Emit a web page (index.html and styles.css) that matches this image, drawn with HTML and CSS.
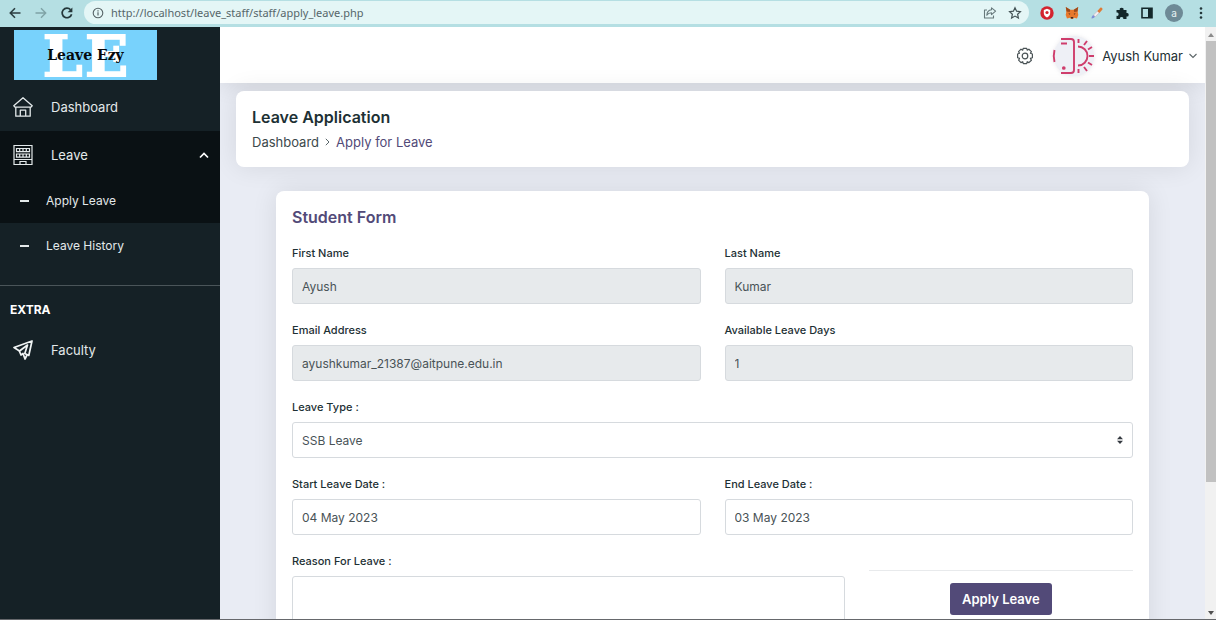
FILE: index.html
```html
<!DOCTYPE html>
<html lang="en">
<head>
<meta charset="utf-8">
<title>Leave Application</title>
<link rel="stylesheet" href="styles.css">
</head>
<body>
<div class="window">
  <div class="toolbar">
    <button class="tool" type="button" aria-label="Back"><svg width="14" height="14" viewBox="0 0 14 14" fill="none" stroke="#2c3e41" stroke-width="1.6"><path d="M12.5 7H2.5M7 2.3 2.3 7 7 11.7"/></svg></button>
    <button class="tool" type="button" aria-label="Forward"><svg width="14" height="14" viewBox="0 0 14 14" fill="none" stroke="#7fa3a6" stroke-width="1.4"><path d="M1.5 7h10M7 2.3 11.7 7 7 11.7"/></svg></button>
    <button class="tool" type="button" aria-label="Reload"><svg width="14" height="14" viewBox="0 0 14 14"><path d="M11.6 8.2A4.8 4.8 0 1 1 10.6 3.8" fill="none" stroke="#24373a" stroke-width="1.7"/><path d="M12.4 1.4v4.8H7.6z" fill="#24373a"/></svg></button>
    <div class="address">
      <svg width="12" height="12" viewBox="0 0 12 12" fill="none" stroke="#566366"><circle cx="6" cy="6" r="4.8" stroke-width="1.1"/><path d="M6 5.3v3.3M6 3.2v1.2" stroke-width="1.2"/></svg>
      <input class="url" type="text" aria-label="Address" value="http://localhost/leave_staff/staff/apply_leave.php">
      <button class="tool" type="button" aria-label="Share"><svg width="14" height="14" viewBox="0 0 14 14" fill="none" stroke="#66787b" stroke-width="1.1" stroke-linejoin="round"><path d="M4 4H1.5v8h9V9.6"/><path d="M8.5 1.8 12.6 5.2 8.5 8.6V6.7C6.3 6.7 4.9 7.4 3.8 9.2 4 6 5.8 4 8.5 3.7z"/></svg></button>
      <button class="tool" type="button" aria-label="Bookmark"><svg width="14" height="14" viewBox="0 0 14 14" fill="none" stroke="#445356" stroke-width="1.2"><path d="m7 1.7 1.6 3.5 3.8.4-2.8 2.6.8 3.8L7 10.1 3.6 12l.8-3.8L1.6 5.6l3.8-.4z"/></svg></button>
    </div>
    <div class="extensions">
      <button class="tool" type="button" aria-label="Ad blocker"><svg width="14" height="14" viewBox="0 0 14 14"><circle cx="7" cy="7" r="6.7" fill="#d3242f"/><path d="M7 2.7 10.2 4v3c0 2-1.4 3.5-3.2 4.5C5.2 10.5 3.8 9 3.8 7V4z" fill="#fff"/><circle cx="7" cy="6.5" r="1.6" fill="#d3242f"/></svg></button>
      <button class="tool" type="button" aria-label="Wallet"><svg width="14" height="14" viewBox="0 0 14 14"><path d="m.8 1 4.4 2.8h3.6L13.2 1l-.5 5 .6 3-1.3 3.5-3-.8L8 13H6l-1-1.300-3 .8L.7 9l.6-3z" fill="#e8792c"/><path d="m.8 1 4.400 2.800L4.800 6 1.600 5.600zM13.200 1 8.800 3.800 9.200 6l3.200-.4z" fill="#9c4a1c"/><path d="m3.300 7.200 2 .6-.5 1zM10.700 7.200l-2 .6.5 1zM5.700 11h2.600L8 12.600H6z" fill="#3b2b26"/></svg></button>
      <button class="tool" type="button" aria-label="Color picker"><svg width="14" height="14" viewBox="0 0 14 14"><path d="M1.500 12.500c.2-2.200 1-3.500 2.500-3.500l1 1c0 1.400-1.500 2.300-3.500 2.500z" fill="#7e8fd6"/><path d="m3.500 9 4-4 1.800 1.800-4 4z" fill="#f3eef1" stroke="#b9a9b4" stroke-width=".5"/><path d="m7.300 5 3-3.200c1-.9 2.900.8 2 1.900l-3 3.300z" fill="#e07a35"/></svg></button>
      <button class="tool" type="button" aria-label="Extensions"><svg width="14" height="14" viewBox="0 0 14 14"><path d="M1.500 4h3.300a1.900 1.900 0 1 1 3.700 0h3v3a1.800 1.800 0 1 1 0 3.500V13H8.300a1.700 1.700 0 1 0-3.300 0H1.500V9.800a1.700 1.700 0 1 0 0-3.300z" fill="#14282b"/></svg></button>
      <button class="tool" type="button" aria-label="Side panel"><svg width="14" height="14" viewBox="0 0 14 14"><path d="M2 2.200h10v9.600H2z" fill="none" stroke="#14282b" stroke-width="1.600"/><path d="M8 2h4v10H8z" fill="#14282b"/></svg></button>
      <button class="profile" type="button" aria-label="Profile">a</button>
      <button class="tool" type="button" aria-label="Menu"><svg width="14" height="14" viewBox="0 0 14 14" fill="#24373a"><circle cx="7" cy="2.500" r="1.300"/><circle cx="7" cy="7" r="1.300"/><circle cx="7" cy="11.500" r="1.300"/></svg></button>
    </div>
  </div>

  <div class="page">
    <aside class="sidebar">
      <a class="brand" href="#">
        <span class="brand-initials" aria-hidden="true"><span>L</span><span>E</span></span>
        <span class="brand-name">Leave Ezy</span>
      </a>
      <nav class="menu">
        <a class="menu-item" href="#">
          <svg width="20" height="22" viewBox="0 0 20 22" fill="none" stroke="#e3e9ea" stroke-width="1.300" stroke-linejoin="round"><path d="M.8 9.800 10 1.800l9.200 8-1.200 1.300H2zM2.800 11v9.200h14.400V11M7.300 20v-5.800h5.400V20"/></svg>
          <span>Dashboard</span>
        </a>
        <div class="menu-open">
          <a class="menu-item" href="#">
            <svg width="20" height="22" viewBox="0 0 20 22" fill="none" stroke="#e3e9ea" stroke-width="1.200"><path d="M1 1.500h18v19H1zM1 15.500h18M3.500 4.500h13v3.200h-13zM3.500 10h13v3.200h-13zM6.700 4.500v3.200M10 4.500v3.200M13.300 4.500v3.200M6.700 10v3.200M10 10v3.200M13.300 10v3.200M7 20.500v-3h6v3"/></svg>
            <span>Leave</span>
            <svg class="caret" width="10" height="8" viewBox="0 0 10 8" fill="none" stroke="#fff" stroke-width="1.700"><path d="m1 6.500 4-4 4 4"/></svg>
          </a>
          <a class="sub-item" href="#">Apply Leave</a>
        </div>
        <a class="sub-item" href="#">Leave History</a>
        <hr class="menu-rule">
        <h2 class="menu-title">EXTRA</h2>
        <a class="menu-item" href="#">
          <svg width="20" height="22" viewBox="0 0 20 22" fill="none" stroke="#f0f4f4" stroke-width="1.700" stroke-linejoin="round" stroke-linecap="round"><path d="M1 8.500 19 2l-3.200 14.500-4-2L14.500 6 6.500 12z"/><path d="M6.500 12.500 8 16l2-1.500 2 5.500 2-4"/></svg>
          <span>Faculty</span>
        </a>
      </nav>
    </aside>

    <div class="main">
      <header class="header">
        <button class="gear" type="button" aria-label="Settings"><svg width="18" height="18" viewBox="0 0 18 18" fill="none" stroke="#4a5356" stroke-width="1.200" stroke-linejoin="round"><circle cx="9" cy="9" r="2.800"/><path d="M7.300 1.300h3.400l.5 1.800 1.700-.9 2.500 2.400-1 1.700 2 .7v3.700l-2 .7 1 1.800-2.500 2.400-1.700-.9-.5 2H7.300l-.6-2-1.700.9-2.400-2.400.9-1.800-1.900-.7V7l1.900-.7-.9-1.700L5 2.200l1.700.9z"/></svg></button>
        <button class="account" type="button">
          <svg class="avatar" width="44" height="44" viewBox="0 0 44 44" fill="none" stroke="#cf3d6c" stroke-width="1.900"><circle cx="22" cy="22" r="20" fill="#eef0f6" stroke="none"/><path d="M2.500 16c-1 4-1 8 0 12"/><path d="M9 5h10q3 0 3 3v28q0 3-3 3H9M9 9.500h6"/><circle cx="11.800" cy="34" r=".9" fill="#cf3d6c"/><path d="M26 12.500a9.500 9.500 0 0 1 0 19M26.500 9V5M32 11l3-4M36 15.500l4-2.500M37 22h5M36 28.500l4 2.500M32 33l3 4M26.500 35v4"/></svg>
          <span>Ayush Kumar</span>
          <svg width="8" height="6" viewBox="0 0 8 6" fill="none" stroke="#5c6568" stroke-width="1.100"><path d="m.5 1 3.500 3.500L7.500 1"/></svg>
        </button>
      </header>

      <main class="content">
        <section class="card title-card">
          <h1>Leave Application</h1>
          <nav class="crumbs" aria-label="Breadcrumb">
            <a href="#">Dashboard</a>
            <svg width="5" height="8" viewBox="0 0 5 8" fill="none" stroke="#59666a"><path d="m.8.8 3.200 3.200L.8 7.200"/></svg>
            <span>Apply for Leave</span>
          </nav>
        </section>

        <form class="card form-card">
          <h2>Student Form</h2>
          <div class="fields">
            <div class="field"><label for="first">First Name</label><input id="first" type="text" value="Ayush" readonly></div>
            <div class="field"><label for="last">Last Name</label><input id="last" type="text" value="Kumar" readonly></div>
            <div class="field"><label for="email">Email Address</label><input id="email" type="text" value="ayushkumar_21387@aitpune.edu.in" readonly></div>
            <div class="field"><label for="days">Available Leave Days</label><input id="days" type="text" value="1" readonly></div>
            <div class="field wide"><label for="type">Leave Type :</label>
              <div class="select-box"><select id="type"><option>SSB Leave</option></select><svg width="6" height="8" viewBox="0 0 6 8" fill="#343a40"><path d="M0 3.300 3 0l3 3.300zM0 4.700h6L3 8z"/></svg></div>
            </div>
            <div class="field"><label for="start">Start Leave Date :</label><input id="start" type="text" value="04 May 2023"></div>
            <div class="field"><label for="end">End Leave Date :</label><input id="end" type="text" value="03 May 2023"></div>
            <div class="field reason"><label for="reason">Reason For Leave :</label><textarea id="reason" rows="5"></textarea></div>
            <div class="actions"><button class="submit" type="submit">Apply Leave</button></div>
          </div>
        </form>
      </main>
    </div>

    <div class="scrollbar" aria-hidden="true">
      <svg width="6" height="4" viewBox="0 0 6 4" fill="#8b8b8b"><path d="M0 4 3 0l3 4z"/></svg>
      <div class="track"><div class="thumb"></div></div>
      <svg width="6" height="4" viewBox="0 0 6 4" fill="#505050"><path d="M0 0h6L3 4z"/></svg>
    </div>
  </div>
</div>
</body>
</html>
```
FILE: styles.css
```css
* { box-sizing: border-box; }

body {
  margin: 0;
  font-family: Inter, "Liberation Sans", sans-serif;
  font-size: 13px;
  color: #1d3034;
}

h1, h2 { margin: 0; }
a { color: inherit; text-decoration: none; }
svg { display: block; flex: none; }

button {
  border: 0;
  padding: 0;
  background: none;
  font: inherit;
  color: inherit;
}

.window {
  display: flex;
  flex-direction: column;
  height: 100vh;
  overflow: hidden;
  border-bottom: 1px solid #66686c;
}

/* Browser toolbar */
.toolbar {
  flex: none;
  display: flex;
  align-items: center;
  gap: 12px;
  height: 27px;
  padding: 0 8px 2px 8px;
  background: #b5dfe3;
}

.address {
  flex: 1;
  display: flex;
  align-items: center;
  gap: 7px;
  height: 23px;
  margin: 0 -1px 0 -2px;
  padding: 0 7px 0 8px;
  border-radius: 12px;
  background: #e4f6f6;
}

.address .tool { margin-left: 4px; }

.url {
  flex: 1;
  min-width: 0;
  border: 0;
  padding: 0;
  background: none;
  font: 11px "Noto Sans", "Open Sans", sans-serif;
  color: #56666a;
}

.extensions {
  display: flex;
  align-items: center;
  gap: 11px;
}

.profile {
  width: 18px;
  height: 18px;
  border-radius: 50%;
  background: #6e8a96;
  color: #e8f2f4;
  font-size: 10px;
  line-height: 18px;
}

/* Page shell */
.page {
  flex: 1;
  display: flex;
  min-height: 0;
}

.sidebar {
  flex: none;
  width: 220px;
  background: #152126;
  color: #e3e9ea;
}

.brand {
  display: grid;
  place-items: center;
  width: 143px;
  height: 50px;
  margin: 3px 0 3px 14px;
  background: #78d2fc;
  font-family: "DejaVu Serif", serif;
  font-weight: bold;
}

.brand > span { grid-area: 1 / 1; }

.brand-initials {
  display: flex;
  gap: 3px;
  padding-top: 3px;
  font-size: 56px;
  line-height: 47px;
  color: #fff;
  -webkit-text-stroke: 2px #fff;
}

.brand-name {
  z-index: 1;
  font-size: 14px;
  color: #05090c;
}

.menu-item {
  display: flex;
  align-items: center;
  gap: 18px;
  height: 48px;
  padding: 0 11px 0 13px;
}

.caret { margin-left: auto; }

.menu-open { background: #0a1114; }
.menu-open .menu-item { height: 47px; }

.sub-item {
  display: flex;
  align-items: center;
  gap: 17px;
  height: 45px;
  padding-left: 20px;
  font-size: 12px;
}

.sub-item::before {
  content: "";
  width: 9px;
  height: 2px;
  background: #e3e9ea;
}

.menu-rule {
  margin: 17px 0 0;
  border: 0;
  border-top: 1px solid #4a5559;
}

.menu-title {
  padding: 16px 10px 8px;
  font-size: 12px;
  line-height: 16px;
  color: #fff;
}

.main {
  flex: 1;
  display: flex;
  flex-direction: column;
  min-width: 0;
  overflow: hidden;
  background: #e9ecf4;
}

.header {
  flex: none;
  display: flex;
  align-items: center;
  justify-content: flex-end;
  gap: 18px;
  height: 56px;
  padding: 2px 8px 0 0;
  background: #fff;
  box-shadow: 0 0 24px rgba(0, 0, 0, 0.12);
}

.account {
  display: flex;
  align-items: center;
  gap: 6px;
}

.avatar { filter: drop-shadow(0 0 2px rgba(60, 60, 90, 0.12)); }

.content { padding: 8px 16px 16px; }

.card {
  background: #fff;
  border-radius: 8px;
  box-shadow: 0 0 26px rgba(0, 0, 0, 0.09);
}

.title-card {
  margin-bottom: 24px;
  padding: 16px;
}

.title-card h1 {
  font-size: 16px;
  font-weight: 600;
  line-height: 20px;
}

.crumbs {
  display: flex;
  align-items: center;
  gap: 6px;
  padding: 6px 0 0;
  line-height: 18px;
  color: #3c494c;
}

.crumbs span { color: #524a78; }

/* Leave form */
.form-card {
  margin: 0 40px;
  padding: 16px;
}

.form-card h2 {
  margin-bottom: 16px;
  font-size: 16px;
  font-weight: 600;
  line-height: 20px;
  color: #524a78;
}

.fields {
  display: grid;
  grid-template-columns: repeat(12, 1fr);
  gap: 16px 24px;
}

.field {
  grid-column: span 6;
  display: flex;
  flex-direction: column;
}

.field.wide { grid-column: span 12; }
.field.reason { grid-column: span 8; }

label {
  margin-bottom: 5px;
  font-size: 11px;
  font-weight: 500;
  line-height: 20px;
}

.field input,
.field select,
.field textarea {
  width: 100%;
  height: 36px;
  border: 1px solid #d6dade;
  border-radius: 3px;
  padding: 0 9px;
  background: #fff;
  font: 12px Inter, "Liberation Sans", sans-serif;
  color: #495357;
}

.field input:read-only { background: #e7eaec; }

.field textarea {
  height: 120px;
  resize: none;
}

.field select { appearance: none; }

.select-box {
  display: grid;
  align-items: center;
}

.select-box > * { grid-area: 1 / 1; }

.select-box svg {
  justify-self: end;
  margin-right: 10px;
  pointer-events: none;
}

.actions {
  grid-column: span 4;
  align-self: start;
  margin-top: 19px;
  border-top: 1px solid #e8eaec;
  padding-top: 12px;
  text-align: center;
}

.submit {
  height: 32px;
  padding: 0 12px;
  border-radius: 3px;
  background: #524a78;
  font-weight: 600;
  color: #fff;
}

/* Scrollbar */
.scrollbar {
  flex: none;
  display: flex;
  flex-direction: column;
  align-items: center;
  gap: 4px;
  width: 11px;
  padding: 6px 0 4px;
  background: #f1f1f1;
}

.track {
  flex: 1;
  align-self: stretch;
}

.thumb {
  height: 78%;
  margin-left: 1px;
  background: #c1c1c1;
}
```
